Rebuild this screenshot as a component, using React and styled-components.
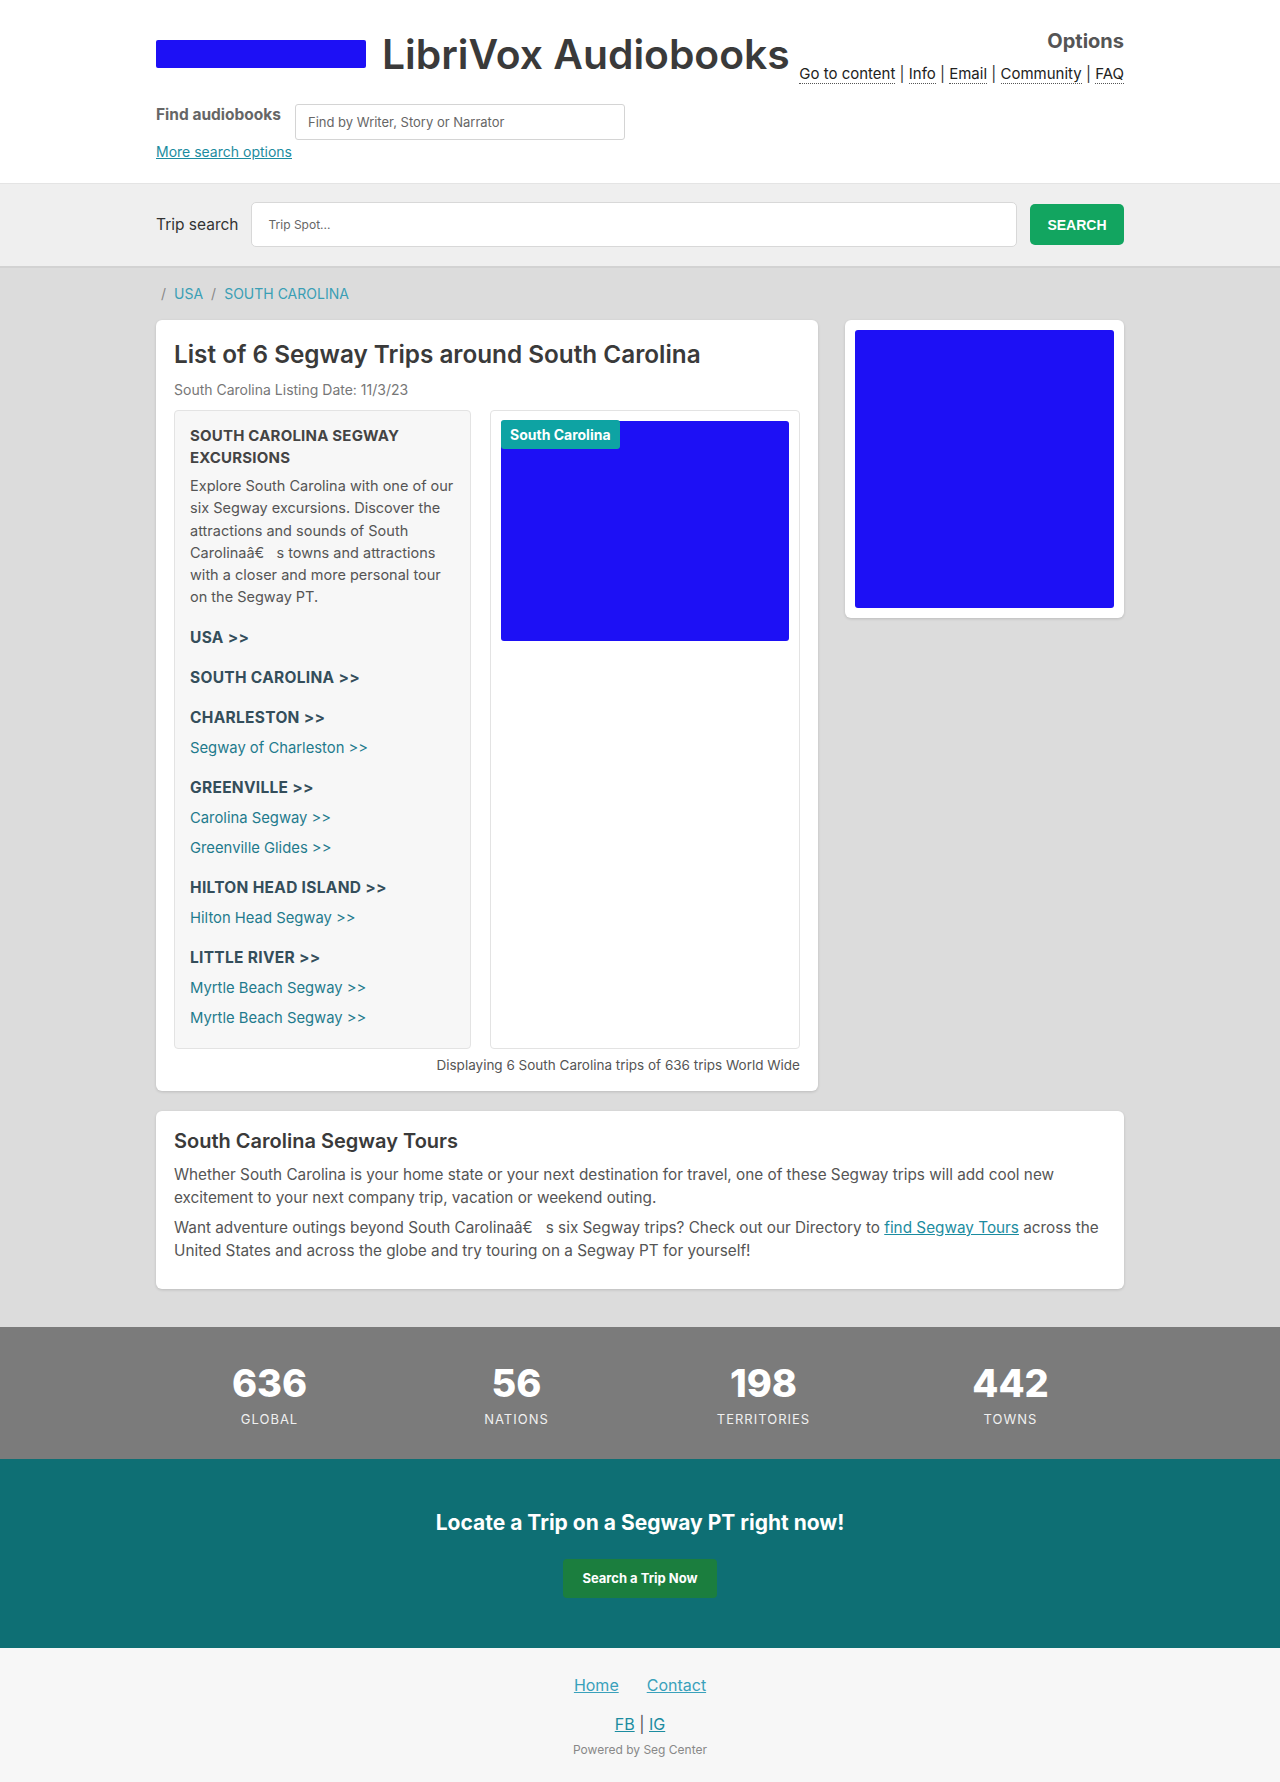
import styled, { createGlobalStyle } from "styled-components";

const GlobalStyle = createGlobalStyle`
  html, body {
    margin: 0;
    padding: 0;
    background: #ffffff;
    font-family: Inter, "Noto Sans", "Liberation Sans", sans-serif;
    color: #444;
  }
  * { box-sizing: border-box; }
`;

const cities = [
  { name: "USA >>", trips: [] },
  { name: "SOUTH CAROLINA >>", trips: [] },
  { name: "CHARLESTON >>", trips: ["Segway of Charleston >>"] },
  { name: "GREENVILLE >>", trips: ["Carolina Segway >>", "Greenville Glides >>"] },
  { name: "HILTON HEAD ISLAND >>", trips: ["Hilton Head Segway >>"] },
  { name: "LITTLE RIVER >>", trips: ["Myrtle Beach Segway >>", "Myrtle Beach Segway >>"] },
];

const stats = [
  { value: "636", label: "GLOBAL" },
  { value: "56", label: "NATIONS" },
  { value: "198", label: "TERRITORIES" },
  { value: "442", label: "TOWNS" },
];

const App = () => {
  return (
    <>
      <GlobalStyle />
      <Header>
        <Container>
          <TopRow>
            <Brand>
              <LogoBox />
              <SiteTitle>LibriVox Audiobooks</SiteTitle>
            </Brand>
            <Options>
              <OptionsTitle>Options</OptionsTitle>
              <OptionLinks>
                <DotLink>Go to content</DotLink> | <DotLink>Info</DotLink> |{" "}
                <DotLink>Email</DotLink> | <DotLink>Community</DotLink> |{" "}
                <DotLink>FAQ</DotLink>
              </OptionLinks>
            </Options>
          </TopRow>
          <FindRow>
            <FindLabel>Find audiobooks</FindLabel>
            <FindInput placeholder="Find by Writer, Story or Narrator" />
          </FindRow>
          <MoreLink>More search options</MoreLink>
        </Container>
      </Header>

      <SearchBar>
        <Container>
          <SearchRow>
            <SearchLabel>Trip search</SearchLabel>
            <SearchInput placeholder="Trip Spot..." />
            <SearchButton>SEARCH</SearchButton>
          </SearchRow>
        </Container>
      </SearchBar>

      <Main>
        <Container>
          <Crumbs>
            <Slash>/</Slash>
            <Crumb>USA</Crumb>
            <Slash>/</Slash>
            <Crumb>SOUTH CAROLINA</Crumb>
          </Crumbs>
          <Columns>
            <Card>
              <CardTitle>List of 6 Segway Trips around South Carolina</CardTitle>
              <DateLine>South Carolina Listing Date: 11/3/23</DateLine>
              <Split>
                <ListBox>
                  <ListHeading>SOUTH CAROLINA SEGWAY EXCURSIONS</ListHeading>
                  <ListText>
                    {"Explore South Carolina with one of our six Segway excursions. Discover the attractions and sounds of South Carolinaâ€\u00a0\u00a0\u00a0s towns and attractions with a closer and more personal tour on the Segway PT."}
                  </ListText>
                  {cities.map((c, i) => (
                    <CityGroup key={i}>
                      <CityName>{c.name}</CityName>
                      {c.trips.map((t, j) => (
                        <TripLink key={j}>{t}</TripLink>
                      ))}
                    </CityGroup>
                  ))}
                </ListBox>
                <MapBox>
                  <MapImage>
                    <StateBadge>South Carolina</StateBadge>
                  </MapImage>
                </MapBox>
              </Split>
              <CardFoot>
                Displaying 6 South Carolina trips of 636 trips World Wide
              </CardFoot>
            </Card>
            <SideCard>
              <SideImage />
            </SideCard>
          </Columns>
          <InfoCard>
            <InfoTitle>South Carolina Segway Tours</InfoTitle>
            <InfoText>
              Whether South Carolina is your home state or your next destination
              for travel, one of these Segway trips will add cool new excitement
              to your next company trip, vacation or weekend outing.
            </InfoText>
            <InfoText>
              {"Want adventure outings beyond South Carolinaâ€\u00a0\u00a0\u00a0s six Segway trips? Check out our Directory to "}
              <InlineLink>find Segway Tours</InlineLink>
              {" across the United States and across the globe and try touring on a Segway PT for yourself!"}
            </InfoText>
          </InfoCard>
        </Container>
      </Main>

      <StatsBand>
        <StatsGrid>
          {stats.map((s) => (
            <Stat key={s.label}>
              <StatValue>{s.value}</StatValue>
              <StatLabel>{s.label}</StatLabel>
            </Stat>
          ))}
        </StatsGrid>
      </StatsBand>

      <CtaBand>
        <CtaTitle>Locate a Trip on a Segway PT right now!</CtaTitle>
        <CtaButton>Search a Trip Now</CtaButton>
      </CtaBand>

      <Footer>
        <FooterNav>
          <FooterLink>Home</FooterLink>
          <FooterLink>Contact</FooterLink>
        </FooterNav>
        <Social>
          <SocialLink>FB</SocialLink> | <SocialLink>IG</SocialLink>
        </Social>
        <Powered>Powered by Seg Center</Powered>
      </Footer>
    </>
  );
};

export default App;

const Container = styled.div`
  max-width: 1000px;
  margin: 0 auto;
  padding: 0 16px;
`;

/* header */

const Header = styled.header`
  background: #ffffff;
  padding: 28px 0 22px;
  border-bottom: 1px solid #e4e4e4;
`;

const TopRow = styled.div`
  display: flex;
  justify-content: space-between;
  align-items: flex-start;
`;

const Brand = styled.div`
  display: flex;
  align-items: center;
  gap: 16px;
  flex-shrink: 0;
`;

const LogoBox = styled.div`
  width: 210px;
  height: 28px;
  background: #1d10f5;
  border-radius: 2px;
`;

const SiteTitle = styled.h1`
  margin: 0;
  font-size: 40.8px;
  font-weight: 600;
  color: #3a3a3a;
  line-height: 52px;
  white-space: nowrap;
`;

const Options = styled.div`
  text-align: right;
  white-space: nowrap;
`;

const OptionsTitle = styled.div`
  font-size: 20px;
  font-weight: 700;
  color: #555;
  line-height: 26px;
`;

const OptionLinks = styled.div`
  margin-top: 10px;
  font-size: 15px;
  color: #333;
  line-height: 20px;
`;

const DotLink = styled.a`
  color: #222;
  border-bottom: 1px dotted #555;
  cursor: pointer;
`;

const FindRow = styled.div`
  display: flex;
  align-items: flex-start;
  gap: 14px;
  margin-top: 20px;
`;

const FindLabel = styled.span`
  font-size: 15.5px;
  font-weight: 700;
  color: #666;
  line-height: 22px;
`;

const FindInput = styled.input`
  width: 330px;
  height: 36px;
  border: 1px solid #d4d4d4;
  border-radius: 3px;
  padding: 0 12px;
  font-family: inherit;
  font-size: 13px;
  &::placeholder { color: #666; }
`;

const MoreLink = styled.a`
  display: inline-block;
  margin-top: 3px;
  font-size: 14px;
  color: #1c8ca0;
  text-decoration: underline;
  cursor: pointer;
`;

/* trip search */

const SearchBar = styled.div`
  background: #efefef;
  padding: 18px 0 19px;
  border-bottom: 2px solid #d2d2d2;
`;

const SearchRow = styled.div`
  display: flex;
  align-items: center;
  gap: 13px;
`;

const SearchLabel = styled.label`
  font-size: 15.5px;
  color: #333;
  white-space: nowrap;
`;

const SearchInput = styled.input`
  flex: 1;
  height: 45px;
  border: 1px solid #d8d8d8;
  border-radius: 5px;
  padding: 0 16px;
  font-family: inherit;
  font-size: 12px;
  &::placeholder { color: #666; }
`;

const SearchButton = styled.button`
  width: 94px;
  height: 41px;
  background: #12a560;
  border: none;
  border-radius: 5px;
  color: #fff;
  font-family: "Liberation Sans", Arial, sans-serif;
  font-size: 14px;
  font-weight: 700;
  cursor: pointer;
`;

/* main */

const Main = styled.main`
  background: #dcdcdc;
  padding: 16px 0 38px;
`;

const Crumbs = styled.div`
  display: flex;
  gap: 8px;
  padding-left: 5px;
  font-size: 14px;
  line-height: 20px;
`;

const Slash = styled.span`
  color: #888;
`;

const Crumb = styled.a`
  color: #3a9fb5;
  cursor: pointer;
`;

const Columns = styled.div`
  display: grid;
  grid-template-columns: 662px 1fr;
  gap: 27px;
  align-items: start;
  margin-top: 16px;
`;

const Card = styled.section`
  background: #fff;
  border-radius: 6px;
  box-shadow: 0 1px 3px rgba(0, 0, 0, 0.15);
  padding: 18px 18px 18px;
`;

const CardTitle = styled.h2`
  margin: 0;
  font-size: 24.3px;
  font-weight: 600;
  color: #3a3a3a;
  line-height: 32px;
`;

const DateLine = styled.div`
  margin-top: 11px;
  font-size: 14px;
  color: #777;
`;

const Split = styled.div`
  display: grid;
  grid-template-columns: 297px 1fr;
  gap: 19px;
  margin-top: 12px;
`;

const ListBox = styled.div`
  background: #f7f7f7;
  border: 1px solid #e3e3e3;
  border-radius: 4px;
  padding: 14px 15px 19px;
`;

const ListHeading = styled.h3`
  margin: 0;
  font-size: 15px;
  letter-spacing: 0.2px;
  font-weight: 700;
  color: #444;
  line-height: 22px;
`;

const ListText = styled.p`
  margin: 6px 0 0;
  font-size: 14.5px;
  line-height: 22.3px;
  color: #555;
`;

const CityGroup = styled.div`
  margin-top: 18px;
  display: flex;
  flex-direction: column;
`;

const CityName = styled.a`
  font-size: 15.5px;
  letter-spacing: 0.3px;
  font-weight: 700;
  color: #344e5b;
  line-height: 22px;
`;

const TripLink = styled.a`
  margin-top: 8px;
  font-size: 14.8px;
  color: #1f7b8d;
  line-height: 22px;
  cursor: pointer;
`;

const MapBox = styled.div`
  background: #fff;
  border: 1px solid #e3e3e3;
  border-radius: 4px;
  padding: 10px;
`;

const MapImage = styled.div`
  position: relative;
  height: 220px;
  background: #1d10f5;
  border-radius: 3px;
`;

const StateBadge = styled.span`
  position: absolute;
  top: -1px;
  left: 0;
  background: #0ea3a3;
  color: #fff;
  font-size: 14px;
  font-weight: 700;
  padding: 6px 9px;
  border-radius: 3px;
`;

const CardFoot = styled.div`
  margin-top: 8px;
  text-align: right;
  font-size: 13.5px;
  color: #555;
`;

const SideCard = styled.aside`
  background: #fff;
  border-radius: 6px;
  box-shadow: 0 1px 3px rgba(0, 0, 0, 0.15);
  padding: 10px;
`;

const SideImage = styled.div`
  height: 278px;
  background: #1d10f5;
  border-radius: 3px;
`;

const InfoCard = styled.section`
  margin-top: 20px;
  background: #fff;
  border-radius: 6px;
  box-shadow: 0 1px 3px rgba(0, 0, 0, 0.15);
  padding: 16px 18px 20px;
`;

const InfoTitle = styled.h2`
  margin: 0 0 8px;
  font-size: 20px;
  font-weight: 600;
  color: #3a3a3a;
  line-height: 28px;
`;

const InfoText = styled.p`
  margin: 0 0 7px;
  font-size: 15.3px;
  line-height: 23px;
  color: #555;
`;

const InlineLink = styled.a`
  color: #1c8ca0;
  text-decoration: underline;
  cursor: pointer;
`;

/* bands */

const StatsBand = styled.div`
  background: #7b7b7b;
  padding: 34px 0 32px;
`;

const StatsGrid = styled.div`
  max-width: 988px;
  margin: 0 auto;
  display: grid;
  grid-template-columns: repeat(4, 1fr);
`;

const Stat = styled.div`
  text-align: center;
  color: #fff;
`;

const StatValue = styled.div`
  font-size: 38px;
  font-weight: 800;
  line-height: 44px;
`;

const StatLabel = styled.div`
  margin-top: 6px;
  font-size: 13px;
  letter-spacing: 1px;
  color: #f0f0f0;
`;

const CtaBand = styled.div`
  background: #0e6f74;
  padding: 50px 0 50px;
  display: flex;
  flex-direction: column;
  align-items: center;
`;

const CtaTitle = styled.h3`
  margin: 0;
  font-size: 21px;
  font-weight: 700;
  color: #fff;
  line-height: 28px;
`;

const CtaButton = styled.button`
  margin-top: 22px;
  width: 154px;
  height: 39px;
  background: #1b7e3e;
  border: none;
  border-radius: 4px;
  color: #fff;
  font-family: inherit;
  font-size: 13px;
  font-weight: 700;
  cursor: pointer;
`;

/* footer */

const Footer = styled.footer`
  background: #f7f7f7;
  padding: 27px 0 40px;
  text-align: center;
`;

const FooterNav = styled.nav`
  display: flex;
  justify-content: center;
  gap: 28px;
`;

const FooterLink = styled.a`
  font-size: 16px;
  color: #3aa1bb;
  text-decoration: underline;
  cursor: pointer;
`;

const Social = styled.div`
  margin-top: 19px;
  font-size: 16px;
  color: #555;
`;

const SocialLink = styled.a`
  color: #1c8ca0;
  text-decoration: underline;
  cursor: pointer;
`;

const Powered = styled.div`
  margin-top: 8px;
  font-size: 12px;
  color: #888;
`;
